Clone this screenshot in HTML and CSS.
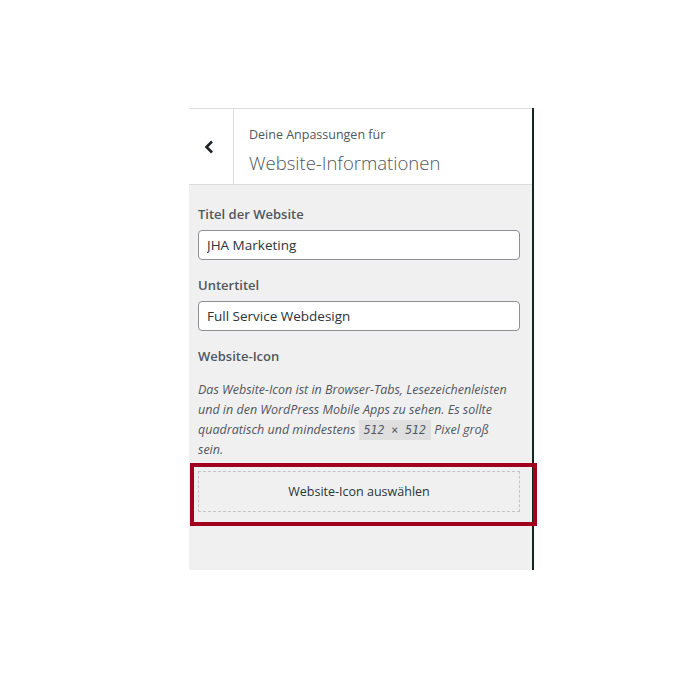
FILE: index.html
```html
<!DOCTYPE html>
<html lang="de">
<head>
  <meta charset="UTF-8">
  <title>Website-Informationen</title>
  <link rel="stylesheet" href="styles.css">
</head>
<body>
  <div class="stage">
    <div class="panel">
      <div class="section-head">
        <button class="back" aria-label="Zurück">
          <svg width="12" height="14" viewBox="0 0 12 14"><polyline points="9,1.5 3.5,7 9,12.5" fill="none" stroke="#1d2327" stroke-width="2.6"/></svg>
        </button>
        <div class="section-title">
          <span class="section-action">Deine Anpassungen für</span>
          <h3>Website-Informationen</h3>
        </div>
      </div>

      <div class="controls">
        <label class="control">
          <span class="control__title">Titel der Website</span>
          <input type="text" value="JHA Marketing">
        </label>
        <label class="control">
          <span class="control__title">Untertitel</span>
          <input type="text" value="Full Service Webdesign">
        </label>
        <div class="control">
          <span class="control__title">Website-Icon</span>
          <p class="control__desc">Das Website-Icon ist in Browser-Tabs, Lesezeichenleisten<br>und in den WordPress Mobile Apps zu sehen. Es sollte<br>quadratisch und mindestens <code>512 × 512</code> Pixel groß<br>sein.</p>
          <button class="upload">Website-Icon auswählen</button>
        </div>
      </div>

      <div class="highlight"></div>
    </div>
  </div>
</body>
</html>
```

FILE: styles.css
```css
html {
  background: #fff;
}

body {
  margin: 0;
  font-family: "Open Sans", "Noto Sans", sans-serif;
  color: #50575e;
}

.stage {
  padding: 107px 0 0 189px;
}

.panel {
  position: relative;
  width: 343px;
  height: 462px;
  background: #f0f0f1;
  border-right: 2px solid #14241f;
  box-sizing: content-box;
}

.section-head {
  display: flex;
  height: 75px;
  margin-top: 1px;
  background: #fff;
  border-top: 1px solid #dcdcde;
  border-bottom: 1px solid #dcdcde;
}

.back {
  width: 45px;
  border: 0;
  border-right: 1px solid #dcdcde;
  background: #fff;
  padding: 0 5px 0 0;
  display: flex;
  align-items: center;
  justify-content: center;
}

.section-title {
  padding: 17px 0 0 15px;
}

.section-action {
  display: block;
  font-size: 12.5px;
  line-height: 18px;
}

.section-title h3 {
  margin: 6px 0 0;
  font-size: 18.5px;
  font-weight: 300;
  line-height: 26px;
  color: #50575e;
}

.controls {
  padding: 19px 12px 0 9px;
}

.control {
  display: block;
  margin-bottom: 15px;
}

.control__title {
  display: block;
  font-size: 13px;
  font-weight: 600;
  line-height: 20px;
  margin-bottom: 6px;
  color: #50575e;
}

.control input {
  display: block;
  width: 100%;
  box-sizing: border-box;
  height: 30px;
  padding: 0 8px;
  border: 1px solid #8c8f94;
  border-radius: 4px;
  background: #fff;
  font-family: inherit;
  font-size: 13.5px;
  color: #2c3338;
}

.control__desc {
  margin: 14px 0 0;
  font-size: 12.5px;
  font-style: italic;
  line-height: 20px;
  white-space: nowrap;
}

.control__desc code {
  font-family: "DejaVu Sans Mono", monospace;
  font-size: 11.5px;
  font-style: italic;
  background: rgba(0, 0, 0, 0.07);
  padding: 3px 5px;
}

.upload {
  display: block;
  width: 100%;
  height: 41px;
  margin-top: 11px;
  border: 1px dashed #c3c4c7;
  background: transparent;
  font-family: inherit;
  font-size: 12.5px;
  color: #2c3338;
}

.highlight {
  position: absolute;
  left: 1px;
  top: 355px;
  width: 339px;
  height: 55px;
  border: 4px solid #a0001e;
}
```
